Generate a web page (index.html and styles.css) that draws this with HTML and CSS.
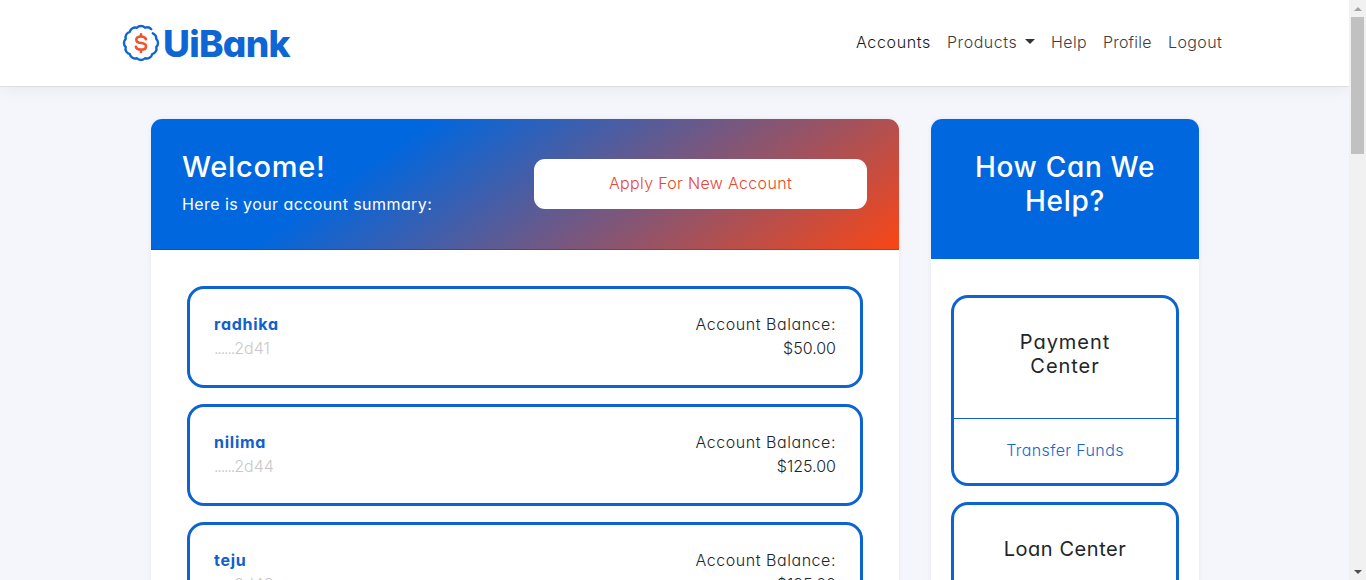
FILE: index.html
```html
<!DOCTYPE html>
<html lang="en">
<head>
<meta charset="utf-8">
<title>UiBank</title>
<link rel="stylesheet" href="styles.css">
</head>
<body>
<div class="viewport">
  <div class="page">
    <header class="navbar">
      <a class="brand">
        <svg class="brand-mark" viewBox="0 0 38 38" width="38" height="38" fill="none" stroke-linecap="round" stroke-linejoin="round">
          <path stroke="#0d66d4" stroke-width="2.4" d="M30.800 9.300A5.600 5.600 0 0 1 34.260 14.910A5.600 5.600 0 0 1 34.260 23.090A5.600 5.600 0 0 1 30.170 30.170A5.600 5.600 0 0 1 23.090 34.260A5.600 5.600 0 0 1 14.910 34.260A5.600 5.600 0 0 1 7.830 30.170A5.600 5.600 0 0 1 3.740 23.090A5.600 5.600 0 0 1 3.740 14.910A5.600 5.600 0 0 1 7.830 7.830A5.600 5.600 0 0 1 14.910 3.740A5.600 5.600 0 0 1 23.090 3.740A5.600 5.600 0 0 1 29.300 5.200"/>
          <path stroke="#f0532d" stroke-width="2.6" d="M24 15.200Q23 12.500 19 12.500Q14.300 12.500 14.300 15.700Q14.300 18.500 19 19Q24 19.500 24 22.400Q24 25.600 19 25.600Q14.700 25.600 13.900 22.800M19 10.200V12.400M19 25.700V27.900"/>
        </svg>
        <span class="brand-name">UiBank</span>
      </a>
      <nav class="nav">
        <a class="nav-link nav-accounts"><span>Accounts</span></a>
        <a class="nav-link nav-products"><span>Products</span><i class="caret"></i></a>
        <a class="nav-link nav-help"><span>Help</span></a>
        <a class="nav-link nav-profile"><span>Profile</span></a>
        <a class="nav-link nav-logout"><span>Logout</span></a>
      </nav>
    </header>
    <main class="content">
      <section class="panel accounts">
        <div class="panel-head summary">
          <div>
            <h3 class="title welcome">Welcome!</h3>
            <p class="subtitle">Here is your account summary:</p>
          </div>
          <a class="apply"><span>Apply For New Account</span></a>
        </div>
        <div class="account-list">
          <article class="account">
            <div><a class="name">radhika</a><div class="number"><span class="dots">......</span>2d41</div></div>
            <div class="balance"><div class="label">Account Balance:</div><div class="amount">$50.00</div></div>
          </article>
          <article class="account">
            <div><a class="name">nilima</a><div class="number"><span class="dots">......</span>2d44</div></div>
            <div class="balance"><div class="label">Account Balance:</div><div class="amount">$125.00</div></div>
          </article>
          <article class="account">
            <div><a class="name">teju</a><div class="number"><span class="dots">......</span>2d48</div></div>
            <div class="balance"><div class="label">Account Balance:</div><div class="amount">$125.00</div></div>
          </article>
        </div>
      </section>
      <aside class="panel help">
        <div class="panel-head help-head"><h3 class="title help-title">How Can We<br>Help?</h3></div>
        <div class="help-list">
          <article class="center">
            <h5 class="center-title">Payment<br>Center</h5>
            <div class="center-foot"><a class="transfer">Transfer Funds</a></div>
          </article>
          <article class="center">
            <h5 class="center-title loan">Loan Center</h5>
          </article>
        </div>
      </aside>
    </main>
  </div>
  <div class="scrollbar">
    <i class="arrow arrow-up"></i>
    <i class="thumb"></i>
    <i class="arrow arrow-down"></i>
  </div>
</div>
</body>
</html>
```

FILE: styles.css
```css
* { box-sizing: border-box; }
body {
  margin: 0;
  font-family: Inter, "Open Sans", sans-serif;
  font-feature-settings: "cv11";
  font-size: 16px;
  font-weight: 300;
  line-height: 24px;
  color: #212529;
}
h3, h5, p { margin: 0; }
.viewport { display: flex; height: 580px; overflow: hidden; }
.page { width: 1349px; background: #f5f6fb; overflow: hidden; }

.navbar {
  display: flex;
  justify-content: space-between;
  height: 87px;
  padding: 0 127px 0 122px;
  background: #fff;
  border-bottom: 1px solid #dedee2;
  box-shadow: 0 2px 16px rgba(0, 0, 0, .06);
}
.brand { display: flex; gap: 3px; padding-top: 24px; }
.brand-name {
  font-size: 37px;
  font-weight: 800;
  line-height: 40px;
  letter-spacing: -.7px;
  color: #0d66d4;
}
.nav {
  display: flex;
  gap: 16px;
  padding-top: 30px;
  color: #3c3e41;
  letter-spacing: .4px;
  white-space: nowrap;
}
.nav-accounts { width: 75px; color: #16181b; letter-spacing: .65px; }
.nav-products { display: flex; width: 88px; justify-content: space-between; letter-spacing: .55px; }
.nav-help { width: 36px; }
.nav-profile { width: 49px; letter-spacing: .2px; }
.nav-logout { width: 54px; }
.caret {
  height: 5px;
  margin-top: 9px;
  border: 5px solid transparent;
  border-top-color: #333;
  border-bottom: 0;
}

.content { display: flex; gap: 32px; padding: 32px 150px 0 151px; }
.panel {
  background: #fff;
  border-radius: 11px 11px 0 0;
  box-shadow: 0 0 5px rgba(0, 0, 0, .06);
  overflow: hidden;
}
.accounts { width: 748px; height: 700px; }
.help { width: 268px; height: 700px; }
.panel-head { color: #fff; background: #0067df; }
.summary {
  display: flex;
  justify-content: space-between;
  height: 131px;
  padding: 31px 32px 0 31px;
  border-bottom: 1px solid rgba(0, 0, 0, .125);
  background: linear-gradient(145deg, #0067df 30%, #fa4616);
}
.title { font-size: 28px; font-weight: 500; line-height: 34px; white-space: nowrap; }
.welcome { font-size: 29px; letter-spacing: .7px; }
.help-title { letter-spacing: .7px; }
.subtitle { margin-top: 8px; font-weight: 400; letter-spacing: .43px; }
.apply {
  width: 333px;
  height: 50px;
  margin-top: 9px;
  border-radius: 11px;
  background: #fff;
  color: #e8442f;
  line-height: 48px;
  letter-spacing: .33px;
  text-align: center;
}
.account-list { display: grid; gap: 16px; padding: 36px; }
.account {
  display: flex;
  justify-content: space-between;
  height: 102px;
  padding: 23px 24px;
  border: 3px solid #0d64d0;
  border-radius: 17px;
}
.name { font-weight: 700; color: #1160cb; letter-spacing: .75px; }
.number { color: #c8c8ca; }
.dots { letter-spacing: -1.15px; }
.balance { text-align: right; }
.label { letter-spacing: .55px; }

.help-head { height: 140px; padding-top: 31px; text-align: center; }
.help-list { display: grid; gap: 16px; padding: 36px 20px; }
.center {
  height: 191px;
  border: 3px solid #0d64d0;
  border-radius: 17px;
  text-align: center;
}
.center-title {
  height: 120px;
  padding-top: 32px;
  font-size: 20px;
  font-weight: 400;
  line-height: 24px;
  letter-spacing: .95px;
}
.loan { letter-spacing: .55px; }
.center-foot { border-top: 1px solid #1160cb; padding-top: 19px; }
.transfer { color: #1768ce; letter-spacing: .38px; }

.scrollbar {
  display: flex;
  flex-direction: column;
  align-items: center;
  width: 17px;
  padding: 7px 0 6px;
  background: #f1f1f1;
}
.arrow { border: 4px solid transparent; }
.arrow-up { border-top: 0; border-bottom-color: #a3a3a3; }
.arrow-down { border-bottom: 0; border-top-color: #505050; margin-top: auto; }
.thumb { width: 13px; height: 137px; margin-top: 6px; background: #c1c1c1; }
```
